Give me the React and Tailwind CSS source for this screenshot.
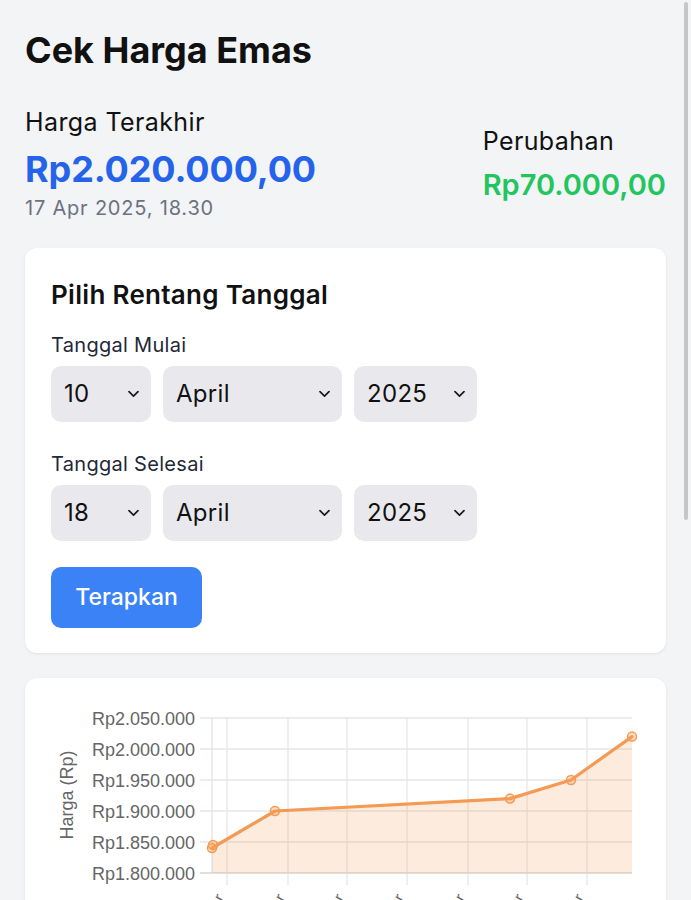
import React from "react";

const font = { fontFamily: "Inter, 'Noto Sans', sans-serif" };

function Chevron() {
  return (
    <svg width="11" height="7" viewBox="0 0 11 7" className="pointer-events-none absolute right-[12px] top-1/2 -translate-y-1/2">
      <path d="M1 1.2 L5.5 5.6 L10 1.2" fill="none" stroke="#1a1a1a" strokeWidth="1.7" strokeLinecap="round" strokeLinejoin="round" />
    </svg>
  );
}

function Select({ value, w }) {
  return (
    <div className={`relative h-[56px] ${w} rounded-[10px] bg-[#e9e9ed] flex items-center pl-[13px] text-[24px] tracking-[0.3px] text-[#111]`}>
      <span>{value}</span>
      <Chevron />
    </div>
  );
}

function DateRow({ label, day }) {
  return (
    <div className="flex flex-col">
      <div className="text-[20px] leading-[24px] tracking-[0.3px] text-[#1f2937] mb-[9px]">{label}</div>
      <div className="flex gap-[12px]">
        <Select value={day} w="w-[100px]" />
        <Select value="April" w="w-[179px]" />
        <Select value="2025" w="w-[123px]" />
      </div>
    </div>
  );
}

function Chart() {
  const hY = [718, 749, 780, 811, 842, 873];
  const labels = ["Rp2.050.000", "Rp2.000.000", "Rp1.950.000", "Rp1.900.000", "Rp1.850.000", "Rp1.800.000"];
  const vX = [227, 288, 347, 407, 468, 527, 587];
  const pts = [
    [212, 848],
    [275, 811],
    [510, 798.6],
    [571, 780],
    [632, 736.6],
  ];
  const line = pts.map((p, i) => `${i ? "L" : "M"}${p[0]} ${p[1]}`).join(" ");
  const area = `${line} L632 873 L212 873 Z`;
  const xl = ["10 Apr", "11 Apr", "12 Apr", "13 Apr", "14 Apr", "15 Apr", "16 Apr"];
  return (
    <svg width="641" height="260" viewBox="25 678 641 260" className="block" style={{ fontFamily: "'Liberation Sans', Arial, sans-serif" }}>
      {hY.map((y) => (
        <line key={y} x1="200" x2="632" y1={y} y2={y} stroke="#e6e6e6" strokeWidth="1.3" />
      ))}
      {vX.map((x) => (
        <line key={x} x1={x} x2={x} y1="718" y2="885" stroke="#e6e6e6" strokeWidth="1.3" />
      ))}
      <line x1="212" x2="212" y1="718" y2="873" stroke="#e3e3e3" strokeWidth="1.3" />
      <line x1="200" x2="632" y1="873" y2="873" stroke="#dcdcdc" strokeWidth="1.3" />
      {labels.map((t, i) => (
        <text key={t} x="195" y={hY[i] + 6.5} textAnchor="end" fontSize="18" fill="#666">
          {t}
        </text>
      ))}
      <text x="0" y="0" transform="translate(73 795) rotate(-90)" textAnchor="middle" fontSize="18" fill="#666">
        Harga (Rp)
      </text>
      <path d={area} fill="rgba(246,160,90,0.2)" />
      <path d={line} fill="none" stroke="#f39a55" strokeWidth="3.2" strokeLinejoin="round" strokeLinecap="round" />
      {pts.map((p, i) => (
        <circle key={i} cx={p[0]} cy={p[1]} r="4.5" fill="rgba(246,160,90,0.35)" stroke="#f39a55" strokeWidth="1.5" />
      ))}
      <circle cx="213" cy="845" r="4.5" fill="rgba(246,160,90,0.35)" stroke="#f39a55" strokeWidth="1.5" />
      {vX.map((x, i) => (
        <text key={x} x="0" y="0" transform={`translate(${x - 2} 898) rotate(-60)`} textAnchor="end" fontSize="16" fill="#666">
          {xl[i]}
        </text>
      ))}
    </svg>
  );
}

export default function App() {
  return (
    <div className="min-h-screen w-full bg-[#f3f4f6] relative overflow-hidden" style={font}>
      <div className="px-[25px] pt-[28px] pb-[40px] flex flex-col">
        <h1 className="text-[36px] leading-[44px] font-bold text-[#111]">Cek Harga Emas</h1>

        <div className="mt-[34px] flex items-center justify-between">
          <div className="flex flex-col">
            <div className="text-[25px] leading-[32px] tracking-[0.4px] text-[#111]">Harga Terakhir</div>
            <div className="mt-[9px] text-[36px] leading-[44px] font-bold text-[#2563eb] tracking-[-0.1px]">Rp2.020.000,00</div>
            <div className="mt-[4px] text-[20px] leading-[26px] tracking-[0.8px] text-[#6b7280]">17 Apr 2025, 18.30</div>
          </div>
          <div className="flex flex-col">
            <div className="text-[25px] leading-[32px] tracking-[0.4px] text-[#111]">Perubahan</div>
            <div className="mt-[10px] text-[29px] leading-[36px] font-semibold text-[#22c55e]">Rp70.000,00</div>
          </div>
        </div>

        <div className="mt-[27px] bg-white rounded-[12px] shadow-[0_1px_3px_rgba(0,0,0,0.08)] px-[26px] pt-[31px] pb-[25px] flex flex-col">
          <h2 className="text-[26px] leading-[32px] font-semibold tracking-[0.3px] text-[#111]">Pilih Rentang Tanggal</h2>
          <div className="mt-[22px]">
            <DateRow label="Tanggal Mulai" day="10" />
          </div>
          <div className="mt-[30px]">
            <DateRow label="Tanggal Selesai" day="18" />
          </div>
          <div className="mt-[26px]">
            <button className="h-[61px] w-[151px] rounded-[10px] bg-[#3b82f6] text-white text-[23px] font-medium">
              Terapkan
            </button>
          </div>
        </div>

        <div className="mt-[25px] bg-white rounded-[12px] shadow-[0_1px_3px_rgba(0,0,0,0.08)] overflow-hidden">
          <Chart />
        </div>
      </div>
      <div className="fixed right-[3px] top-[2px] w-[4px] h-[518px] rounded-full bg-[#c6c6c6]" />
    </div>
  );
}
